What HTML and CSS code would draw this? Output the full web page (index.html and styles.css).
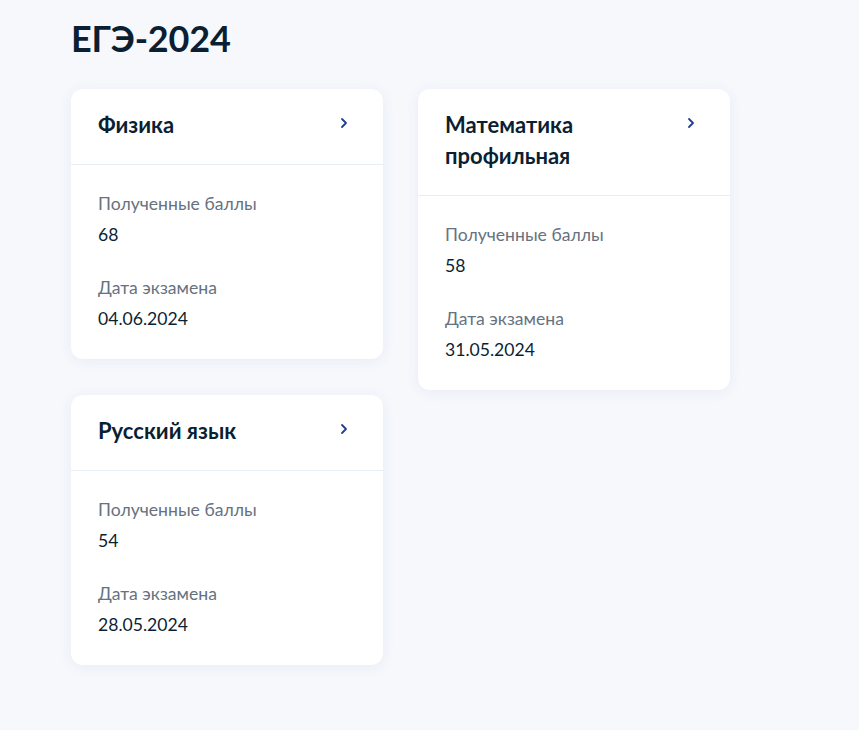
FILE: index.html
```html
<!DOCTYPE html>
<html lang="ru">
<head>
    <meta charset="UTF-8">
    <meta name="viewport" content="width=device-width, initial-scale=1.0">
    <title>ЕГЭ-2024</title>
    <link rel="stylesheet" href="styles.css">
</head>
<body>
    <div class="container">
        <h1 class="page-title">ЕГЭ-2024</h1>
        <div class="columns">
            <div class="column">
                <a class="exam-card" href="#">
                    <div class="exam-head">
                        <h2 class="exam-name">Физика</h2>
                        <svg class="chevron" width="8" height="12" viewBox="0 0 8 12"><path d="M2 2l4 4-4 4" fill="none" stroke="currentColor" stroke-width="1.8" stroke-linecap="round" stroke-linejoin="round"/></svg>
                    </div>
                    <div class="exam-body">
                        <div class="field">
                            <div class="label">Полученные баллы</div>
                            <div class="value">68</div>
                        </div>
                        <div class="field">
                            <div class="label">Дата экзамена</div>
                            <div class="value">04.06.2024</div>
                        </div>
                    </div>
                </a>
                <a class="exam-card" href="#">
                    <div class="exam-head">
                        <h2 class="exam-name">Русский язык</h2>
                        <svg class="chevron" width="8" height="12" viewBox="0 0 8 12"><path d="M2 2l4 4-4 4" fill="none" stroke="currentColor" stroke-width="1.8" stroke-linecap="round" stroke-linejoin="round"/></svg>
                    </div>
                    <div class="exam-body">
                        <div class="field">
                            <div class="label">Полученные баллы</div>
                            <div class="value">54</div>
                        </div>
                        <div class="field">
                            <div class="label">Дата экзамена</div>
                            <div class="value">28.05.2024</div>
                        </div>
                    </div>
                </a>
            </div>
            <div class="column">
                <a class="exam-card" href="#">
                    <div class="exam-head">
                        <h2 class="exam-name">Математика профильная</h2>
                        <svg class="chevron" width="8" height="12" viewBox="0 0 8 12"><path d="M2 2l4 4-4 4" fill="none" stroke="currentColor" stroke-width="1.8" stroke-linecap="round" stroke-linejoin="round"/></svg>
                    </div>
                    <div class="exam-body">
                        <div class="field">
                            <div class="label">Полученные баллы</div>
                            <div class="value">58</div>
                        </div>
                        <div class="field">
                            <div class="label">Дата экзамена</div>
                            <div class="value">31.05.2024</div>
                        </div>
                    </div>
                </a>
            </div>
        </div>
    </div>
</body>
</html>
```

FILE: styles.css
```css
* {
    margin: 0;
    padding: 0;
    box-sizing: border-box;
}

body {
    font-family: Lato, "Noto Sans", Arial, sans-serif;
    background-color: #f6f8fc;
    color: #0b1f33;
    min-height: 100vh;
}

.container {
    padding: 16px 71px 40px;
}

.page-title {
    font-size: 36px;
    line-height: 44px;
    font-weight: 700;
    letter-spacing: -0.2px;
    margin-bottom: 29px;
}

.columns {
    display: flex;
    align-items: flex-start;
    gap: 35px;
}

.column {
    display: flex;
    flex-direction: column;
    gap: 36px;
    width: 312px;
}

.exam-card {
    display: block;
    background-color: #fff;
    border-radius: 12px;
    box-shadow: 0 2px 14px rgba(40, 70, 140, 0.07);
    text-decoration: none;
    color: inherit;
}

.exam-head {
    display: flex;
    justify-content: space-between;
    align-items: flex-start;
    padding: 20px 35px 24px 27px;
    border-bottom: 1px solid #e8eef5;
}

.exam-name {
    font-size: 22px;
    line-height: 31px;
    font-weight: 700;
    max-width: 190px;
}

.chevron {
    color: #1f3f8f;
    margin-top: 8px;
    flex-shrink: 0;
}

.exam-body {
    display: flex;
    flex-direction: column;
    gap: 29px;
    padding: 27px 27px 28px;
}

.label {
    font-size: 17.6px;
    line-height: 24px;
    color: #66727f;
}

.value {
    font-size: 17.6px;
    line-height: 24px;
    margin-top: 7px;
}
```
